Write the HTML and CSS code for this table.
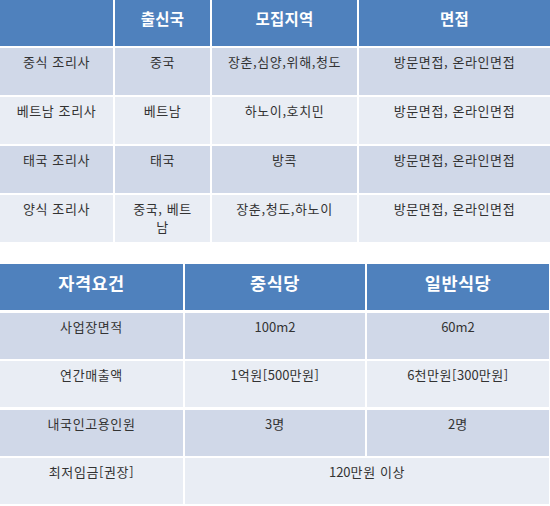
FILE: index.html
```html
<!DOCTYPE html>
<html lang="ko">
<head>
<meta charset="utf-8">
<link rel="stylesheet" href="styles.css">
</head>
<body>
<div class="page">
  <div class="grid t1">
    <div class="cell head"></div>
    <div class="cell head">출신국</div>
    <div class="cell head">모집지역</div>
    <div class="cell head">면접</div>

    <div class="cell odd">중식 조리사</div>
    <div class="cell odd">중국</div>
    <div class="cell odd">장춘,심양,위해,청도</div>
    <div class="cell odd">방문면접, 온라인면접</div>

    <div class="cell even">베트남 조리사</div>
    <div class="cell even">베트남</div>
    <div class="cell even">하노이,호치민</div>
    <div class="cell even">방문면접, 온라인면접</div>

    <div class="cell odd">태국 조리사</div>
    <div class="cell odd">태국</div>
    <div class="cell odd">방콕</div>
    <div class="cell odd">방문면접, 온라인면접</div>

    <div class="cell even">양식 조리사</div>
    <div class="cell even">중국, 베트<br>남</div>
    <div class="cell even">장춘,청도,하노이</div>
    <div class="cell even">방문면접, 온라인면접</div>
  </div>

  <div class="grid t2">
    <div class="cell head">자격요건</div>
    <div class="cell head">중식당</div>
    <div class="cell head">일반식당</div>

    <div class="cell odd">사업장면적</div>
    <div class="cell odd num">100m2</div>
    <div class="cell odd num">60m2</div>

    <div class="cell even">연간매출액</div>
    <div class="cell even"><span class="digits">1</span>억원[<span class="digits">500</span>만원]</div>
    <div class="cell even"><span class="digits">6</span>천만원[<span class="digits">300</span>만원]</div>

    <div class="cell odd">내국인고용인원</div>
    <div class="cell odd"><span class="digits">3</span>명</div>
    <div class="cell odd"><span class="digits">2</span>명</div>

    <div class="cell even">최저임금[권장]</div>
    <div class="cell even span2"><span class="digits">120</span>만원 이상</div>
  </div>
</div>
</body>
</html>
```

FILE: styles.css
```css
html, body {
  margin: 0;
  padding: 0;
  background: #ffffff;
}

.page {
  width: 550px;
  height: 506px;
  overflow: hidden;
  font-family: "Noto Sans CJK KR", "Noto Sans", sans-serif;
  color: #333333;
}

.grid {
  display: grid;
  column-gap: 2px;
}

.t1 {
  grid-template-columns: 113px 95px 145px 1fr;
  grid-template-rows: 46px repeat(4, 47px);
  row-gap: 2px;
}

.t2 {
  margin-top: 22px;
  width: 549px;
  grid-template-columns: 183px 180px 1fr;
  grid-template-rows: 46px repeat(4, 46px);
  row-gap: 2.6px;
}

.cell {
  text-align: center;
  font-size: 13px;
  line-height: 18px;
  letter-spacing: 0.6px;
  padding-top: 5px;
  box-sizing: border-box;
}

.num,
.digits {
  letter-spacing: 0;
}

.head {
  background: #4f81bd;
  color: #ffffff;
  font-weight: bold;
}

.t1 .head {
  font-size: 15.5px;
  line-height: 20px;
  letter-spacing: 0.3px;
  padding-top: 8px;
}

.t2 .head {
  font-size: 17.5px;
  line-height: 22px;
  letter-spacing: 0.5px;
  padding-top: 8px;
}

.odd {
  background: #d0d8e8;
}

.even {
  background: #e9edf4;
}

.span2 {
  grid-column: span 2;
}
```
